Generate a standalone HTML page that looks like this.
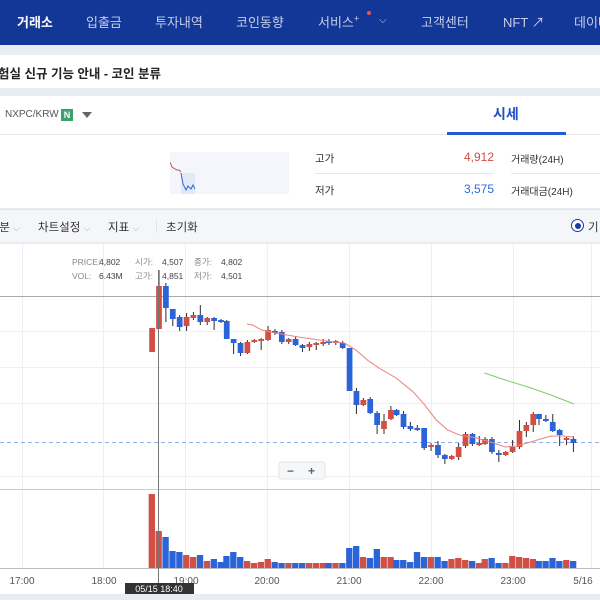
<!DOCTYPE html>
<html><head><meta charset="utf-8"><style>
*{margin:0;padding:0;box-sizing:border-box}
body{width:600px;height:600px;overflow:hidden;background:#e9ecf1;font-family:"Liberation Sans","Noto Sans CJK KR",sans-serif;position:relative}
.a{position:absolute;white-space:nowrap}
.nav{left:0;top:0;width:600px;height:45px;background:#133797}
.nav span{position:absolute;top:12px;font-size:13px;color:#c5cde8}
</style></head><body>
<div class="a nav">
<span style="left:17px;color:#fff;font-weight:bold">거래소</span>
<span style="left:86px">입출금</span>
<span style="left:155px">투자내역</span>
<span style="left:236px">코인동향</span>
<span style="left:318px">서비스<sup style="font-size:9px">+</sup></span>
<div class="a" style="left:367px;top:11px;width:4px;height:4px;border-radius:50%;background:#e8554d"></div>
<span style="left:379px;font-size:10px;top:15px">⌵</span>
<span style="left:421px">고객센터</span>
<span style="left:503px">NFT ↗</span>
<span style="left:574px">데이터</span>
</div>
<div class="a" style="left:0;top:55px;width:600px;height:33px;background:#fff"></div>
<div class="a" style="left:-2px;top:63px;font-size:12.5px;font-weight:bold;color:#222">험실 신규 기능 안내 - 코인 분류</div>
<div class="a" style="left:0;top:96px;width:600px;height:112px;background:#fff"></div>
<div class="a" style="left:0;top:134px;width:600px;height:1px;background:#e4e6ea"></div>
<div class="a" style="left:447px;top:132px;width:119px;height:3px;background:#1f5bd6"></div>
<div class="a" style="left:493px;top:104px;font-size:14px;font-weight:bold;color:#1f4fc4">시세</div>
<div class="a" style="left:5px;top:109px;font-size:10px;color:#555">NXPC/KRW</div>
<div class="a" style="left:61px;top:109px;width:12px;height:12px;background:#3aa26b;color:#fff;font-size:9px;font-weight:bold;text-align:center;line-height:12px">N</div>
<div class="a" style="left:82px;top:112px;width:0;height:0;border-left:5.5px solid transparent;border-right:5.5px solid transparent;border-top:6px solid #666"></div>
<svg class="a" style="left:170px;top:152px" width="119" height="42"><rect width="119" height="42" fill="#f4f6fb"/><rect x="11" y="21" width="14" height="21" fill="#e3e9f6"/><path d="M0,10 L2,15 5,17 7,18 9,18 11,20" stroke="#d24f45" fill="none"/><path d="M11,21 L13,32 16,38 18,34 21,37 23,33 25,37" stroke="#2b6be0" fill="none"/></svg>
<div class="a" style="left:315px;top:151px;font-size:10.5px;color:#333">고가</div>
<div class="a" style="left:315px;top:183px;font-size:10.5px;color:#333">저가</div>
<div class="a" style="left:315px;top:173px;width:179px;height:1px;background:#e6e8ec"></div>
<div class="a" style="left:511px;top:173px;width:89px;height:1px;background:#e6e8ec"></div>
<div class="a" style="left:444px;top:150px;width:50px;text-align:right;font-size:12px;color:#d24f45">4,912</div>
<div class="a" style="left:444px;top:182px;width:50px;text-align:right;font-size:12px;color:#2b6be0">3,575</div>
<div class="a" style="left:511px;top:151px;font-size:10px;color:#333">거래량(24H)</div>
<div class="a" style="left:511px;top:183px;font-size:10px;color:#333">거래대금(24H)</div>
<div class="a" style="left:0;top:209px;width:600px;height:33px;background:#f5f6f9;border-top:1px solid #e3e5ea"></div>
<div class="a" style="left:-7px;top:219px;font-size:11.5px;color:#333">5분 <span style="color:#aaa;font-size:9px">⌵</span></div>
<div class="a" style="left:38px;top:219px;font-size:11.5px;color:#333">차트설정 <span style="color:#aaa;font-size:9px">⌵</span></div>
<div class="a" style="left:108px;top:219px;font-size:11.5px;color:#333">지표 <span style="color:#aaa;font-size:9px">⌵</span></div>
<div class="a" style="left:156px;top:219px;width:1px;height:14px;background:#e2e4e8"></div>
<div class="a" style="left:166px;top:219px;font-size:11.5px;color:#333">초기화</div>
<div class="a" style="left:571px;top:219px;width:13px;height:13px;border-radius:50%;border:1.5px solid #1a3d9c;background:#fff"></div>
<div class="a" style="left:574.5px;top:222.5px;width:6px;height:6px;border-radius:50%;background:#1a3d9c"></div>
<div class="a" style="left:588px;top:219px;font-size:11.5px;color:#333">기</div>
<svg class="a" style="left:0;top:244px" width="600" height="356" viewBox="0 244 600 356">
<rect x="0" y="244" width="600" height="350" fill="#fff"/>
<rect x="0" y="594" width="600" height="6" fill="#e9ecf1"/>
<g stroke="#eeeff2" stroke-width="1">
<line x1="22.5" y1="244" x2="22.5" y2="568"/><line x1="103.5" y1="244" x2="103.5" y2="568"/><line x1="185.5" y1="244" x2="185.5" y2="568"/><line x1="267.5" y1="244" x2="267.5" y2="568"/><line x1="349.5" y1="244" x2="349.5" y2="568"/><line x1="431.5" y1="244" x2="431.5" y2="568"/><line x1="513.5" y1="244" x2="513.5" y2="568"/><line x1="591.5" y1="244" x2="591.5" y2="568"/>
<line x1="0" y1="331.5" x2="600" y2="331.5"/><line x1="0" y1="367.5" x2="600" y2="367.5"/><line x1="0" y1="403.5" x2="600" y2="403.5"/><line x1="0" y1="476.5" x2="600" y2="476.5"/>
</g>
<line x1="0" y1="296.5" x2="600" y2="296.5" stroke="#aaa"/>
<line x1="0" y1="489.5" x2="600" y2="489.5" stroke="#ccc"/>
<line x1="0" y1="568.5" x2="600" y2="568.5" stroke="#bbb"/>
<line x1="0" y1="442.5" x2="600" y2="442.5" stroke="#8fb0f0" stroke-dasharray="4,3"/>
<g transform="scale(1.148,1)">
<g id="cd"></g>
<path d="M215,324 L220,325 228,330 240,333 260,337 290,342 300,343 310,350 320,360 330,368 345,378 360,392 370,405 380,420 390,430 400,435 415,438 430,443 440,447 450,446 465,441 480,436 490,436 500,437" fill="none" stroke="#e8887e" stroke-width="1"/>
<path d="M422,373 L440,380 460,387 480,395 500,404" fill="none" stroke="#7ed06c" stroke-width="1"/>
</g>
<line x1="158.5" y1="270" x2="158.5" y2="584" stroke="#777"/>
<rect x="279" y="462" width="46" height="17" rx="2" fill="#f6f7f9" stroke="#e3e4e7"/>
<text x="287" y="475" font-size="12" fill="#666" font-weight="bold">−</text><text x="308" y="475" font-size="12" fill="#666" font-weight="bold">+</text>
<g font-size="8.5" fill="#888" font-family="Liberation Sans,Noto Sans CJK KR,sans-serif">
<text x="72" y="265">PRICE:</text><text x="99" y="265" fill="#444">4,802</text><text x="135" y="265">시가:</text><text x="162" y="265" fill="#444">4,507</text><text x="194" y="265">종가:</text><text x="221" y="265" fill="#444">4,802</text>
<text x="72" y="279">VOL:</text><text x="99" y="279" fill="#444">6.43M</text><text x="135" y="279">고가:</text><text x="162" y="279" fill="#444">4,851</text><text x="194" y="279">저가:</text><text x="221" y="279" fill="#444">4,501</text>
</g>
<g font-size="10" fill="#555" font-family="Liberation Sans,sans-serif" text-anchor="middle">
<text x="22" y="584">17:00</text><text x="104" y="584">18:00</text><text x="186" y="584">19:00</text><text x="267" y="584">20:00</text><text x="349" y="584">21:00</text><text x="431" y="584">22:00</text><text x="513" y="584">23:00</text><text x="583" y="584">5/16</text>
</g>
<rect x="125" y="583" width="69" height="11" fill="#333"/>
<text x="159" y="592" font-size="9" fill="#fff" text-anchor="middle" font-family="Liberation Sans,sans-serif">05/15 18:40</text>
</svg>
<script>
var C=[[132,'r',328,352,328,352],[138,'r',286,329,270,329],[144,'b',286,308,283,322],[150,'b',309,319,309,326],[156,'b',317,327,315,331],[162,'r',317,326,313,331],[168,'r',315,318,312,320],[174,'b',315,322,305,325],[180,'r',318,322,317,325],[186,'b',318,321,317,330],[192,'b',320,321,319,323],[197,'b',321,339,320,339],[203,'b',339,343,339,354],[209,'b',343,353,342,356],[215,'r',342,353,340,354],[221,'r',340,342,339,343],[227,'r',339,341,338,350],[233,'r',330,340,326,341],[239,'b',331,333,329,335],[245,'b',332,342,330,344],[251,'r',339,342,338,344],[257,'b',339,345,336,346],[263,'b',345,348,344,352],[269,'r',344,347,342,351],[275,'r',343,344,342,350],[281,'r',342,344,339,346],[286,'b',341,343,339,345],[292,'r',341,343,340,345],[298,'b',343,348,341,349],[304,'b',348,391,348,391],[310,'b',391,405,388,414],[316,'r',400,405,398,406],[322,'b',399,413,397,414],[328,'b',413,425,411,434],[334,'r',421,429,414,434],[340,'r',410,419,406,420],[345,'b',410,415,409,416],[351,'b',414,427,411,429],[357,'b',426,429,422,431],[363,'b',428,430,425,431],[369,'b',428,448,428,450],[375,'r',445,447,443,451],[381,'b',445,455,441,458],[387,'b',455,459,454,464],[393,'r',456,459,455,460],[399,'r',447,457,443,460],[405,'r',434,446,432,448],[411,'b',434,444,433,446],[417,'r',443,445,436,446],[422,'r',439,444,437,445],[428,'b',439,452,437,454],[434,'b',453,455,450,462],[440,'r',452,455,451,456],[446,'r',447,452,440,453],[452,'r',431,447,420,449],[458,'r',425,431,422,437],[464,'r',414,425,412,432],[469,'b',414,419,414,425],[475,'b',419,421,415,422],[481,'b',422,431,414,432],[487,'b',430,435,429,446],[493,'r',438,440,437,445],[499,'b',439,443,436,452]];
var V=[494,531,537,551,552,555,557,555,561,559,562,556,552,557,561,563,562,559,562,563,563,563,563,563,563,563,563,563,563,548,546,557,558,549,557,557,560,560,562,552,557,557,557,561,559,558,560,561,563,559,558,563,563,556,557,558,559,561,561,558,561,560,561];
var s='';C.forEach(function(c,i){var col=c[1]=='r'?'#d24f45':'#2b63d9';
s+='<line x1="'+(c[0]+.5)+'" y1="'+c[4]+'" x2="'+(c[0]+.5)+'" y2="'+c[5]+'" stroke="#333" stroke-width="0.9"/>';
s+='<rect x="'+(c[0]-2)+'" y="'+c[2]+'" width="5" height="'+Math.max(2,c[3]-c[2])+'" fill="'+col+'"/>';
var v=V[i]||562;s+='<rect x="'+(c[0]-2.5)+'" y="'+v+'" width="5.5" height="'+(568-v)+'" fill="'+col+'"/>';});
document.getElementById('cd').innerHTML=s;
</script>
</body></html>
